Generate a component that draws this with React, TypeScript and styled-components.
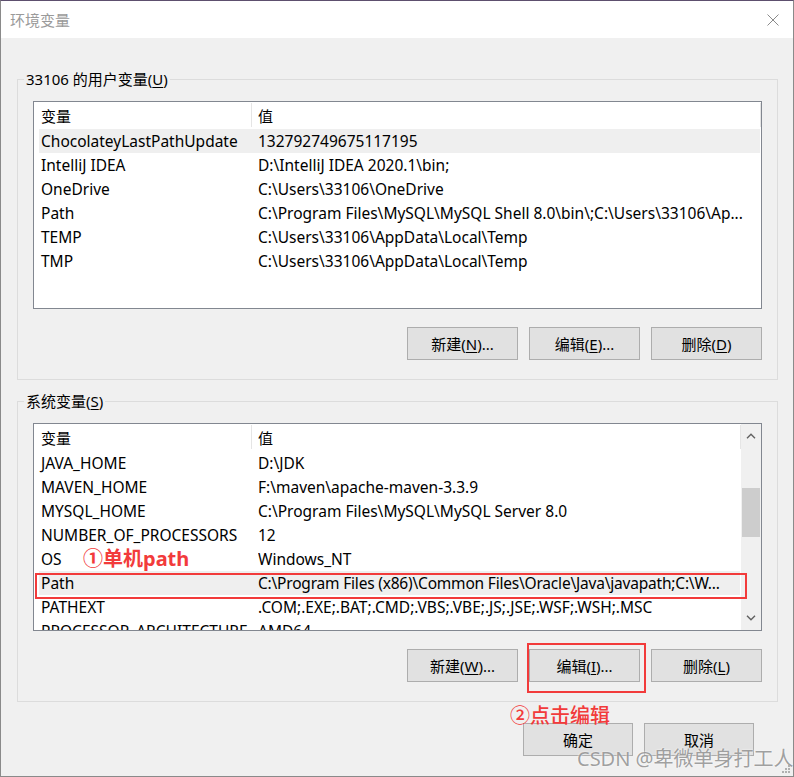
import styled, { createGlobalStyle } from "styled-components";

const GlobalStyle = createGlobalStyle`
  html, body {
    margin: 0;
    padding: 0;
    background: #ffffff;
  }
  body {
    font-family: "Noto Sans", "Noto Sans CJK SC", sans-serif;
  }
`;

const Window = styled.div`
  position: relative;
  width: 794px;
  height: 777px;
  box-sizing: border-box;
  border: 1px solid #8a8a8a;
  border-top-color: #5d4f6e;
  background: #f0f0f0;
  display: flex;
  flex-direction: column;
  font-size: 15px;
  color: #000;
  overflow: hidden;
`;

const TitleBar = styled.div`
  height: 37px;
  flex-shrink: 0;
  background: #fff;
  display: flex;
  align-items: center;
  justify-content: space-between;
  padding: 0 14px 0 9px;
`;

const Title = styled.span`
  font-family: "Noto Sans CJK SC", sans-serif;
  font-size: 15px;
  color: #9a9a9a;
`;

const Body = styled.div`
  display: flex;
  flex-direction: column;
  padding: 0 15px 0 16px;
`;

const Group = styled.fieldset<{ $top: number }>`
  margin: ${(p) => p.$top}px 0 0 0;
  padding: 12px 15px 19px 15px;
  border: 1px solid #dcdcdc;
  min-width: 0;
`;

const Legend = styled.legend`
  margin-left: -9px;
  padding: 0 2px;
  line-height: 20px;
  font-size: 15px;
`;

const Key = styled.span`
  text-decoration: underline;
  text-underline-offset: 2px;
`;

const ListBox = styled.div`
  height: 208px;
  box-sizing: border-box;
  border: 1px solid #828790;
  background: #fff;
  display: flex;
  overflow: hidden;
`;

const ListContent = styled.div`
  flex: 1;
  min-width: 0;
  overflow: hidden;
`;

const HeaderRow = styled.div`
  display: flex;
  height: 27px;
  box-sizing: border-box;
  padding-top: 3px;
  line-height: 24px;
`;

const HeaderCell = styled.div<{ $width?: number }>`
  box-sizing: border-box;
  ${(p) => (p.$width ? `width: ${p.$width}px;` : "flex: 1;")}
  padding-left: ${(p) => (p.$width ? 7 : 6)}px;
  border-right: 1px solid #e5e5e5;
  height: 24px;
  margin-top: -2px;
  padding-top: 2px;
  line-height: 22px;
  font-family: "Noto Sans CJK SC", sans-serif;
`;

const Row = styled.div<{ $selected?: boolean }>`
  display: flex;
  height: 24px;
  line-height: 24px;
  margin: 0 1px 0 5px;
  font-size: 15.5px;
  background: ${(p) => (p.$selected ? "#efefef" : "transparent")};
  white-space: nowrap;
`;

const NameCell = styled.div`
  width: 219px;
  flex-shrink: 0;
  box-sizing: border-box;
  padding-left: 2px;
  overflow: hidden;
`;

const ValueCell = styled.div<{ $tight?: boolean }>`
  flex: 1;
  overflow: hidden;
  letter-spacing: ${(p) => (p.$tight ? "-0.2px" : "normal")};
`;

const ScrollBar = styled.div`
  width: 20px;
  flex-shrink: 0;
  background: #f0f0f0;
  display: flex;
  flex-direction: column;
  align-items: center;
`;

const ScrollArrow = styled.div`
  height: 24px;
  display: flex;
  align-items: center;
  justify-content: center;
  width: 100%;
`;

const Track = styled.div`
  flex: 1;
  width: 100%;
  display: flex;
  flex-direction: column;
  align-items: center;
`;

const Thumb = styled.div`
  margin-top: 40px;
  width: 18px;
  height: 49px;
  background: #cdcdcd;
`;

const ButtonRow = styled.div<{ $gapTop: number; $right?: number }>`
  display: flex;
  justify-content: flex-end;
  gap: 11px;
  margin-top: ${(p) => p.$gapTop}px;
  padding-right: ${(p) => p.$right ?? 0}px;
`;

const Button = styled.button<{ $width?: number }>`
  width: ${(p) => p.$width ?? 111}px;
  height: 33px;
  box-sizing: border-box;
  background: #e1e1e1;
  border: 1px solid #adadad;
  font-family: "Noto Sans", "Noto Sans CJK SC", sans-serif;
  font-size: 15px;
  color: #000;
  padding: 0;
`;

const Mark = styled.div<{ $left: number; $top: number; $width: number; $height: number }>`
  position: absolute;
  left: ${(p) => p.$left}px;
  top: ${(p) => p.$top}px;
  width: ${(p) => p.$width}px;
  height: ${(p) => p.$height}px;
  box-sizing: border-box;
  border: 2px solid #f23b3b;
  pointer-events: none;
`;

const Note = styled.div<{ $left: number; $top: number; $bold?: boolean }>`
  position: absolute;
  left: ${(p) => p.$left}px;
  top: ${(p) => p.$top}px;
  font-family: "Noto Sans", "Noto Sans CJK SC", sans-serif;
  font-size: 20px;
  line-height: 22px;
  font-weight: ${(p) => (p.$bold ? 700 : 500)};
  color: #f23b3b;
  white-space: nowrap;
`;

const Watermark = styled.div`
  position: absolute;
  left: 576px;
  top: 746px;
  font-family: "Noto Sans", "Noto Sans CJK SC", sans-serif;
  font-size: 20px;
  line-height: 24px;
  color: rgba(130, 130, 130, 0.75);
  text-shadow: 0 0 2px #fff;
  white-space: nowrap;
`;

const Grip = styled.svg`
  position: absolute;
  right: 3px;
  bottom: 3px;
`;

type Variable = { name: string; value: string; selected?: boolean; tight?: boolean };

const userVars: Variable[] = [
  { name: "ChocolateyLastPathUpdate", value: "132792749675117195", selected: true },
  { name: "IntelliJ IDEA", value: "D:\\IntelliJ IDEA 2020.1\\bin;" },
  { name: "OneDrive", value: "C:\\Users\\33106\\OneDrive" },
  { name: "Path", value: "C:\\Program Files\\MySQL\\MySQL Shell 8.0\\bin\\;C:\\Users\\33106\\Ap..." },
  { name: "TEMP", value: "C:\\Users\\33106\\AppData\\Local\\Temp" },
  { name: "TMP", value: "C:\\Users\\33106\\AppData\\Local\\Temp" },
];

const systemVars: Variable[] = [
  { name: "JAVA_HOME", value: "D:\\JDK" },
  { name: "MAVEN_HOME", value: "F:\\maven\\apache-maven-3.3.9" },
  { name: "MYSQL_HOME", value: "C:\\Program Files\\MySQL\\MySQL Server 8.0" },
  { name: "NUMBER_OF_PROCESSORS", value: "12" },
  { name: "OS", value: "Windows_NT" },
  {
    name: "Path",
    value: "C:\\Program Files (x86)\\Common Files\\Oracle\\Java\\javapath;C:\\W...",
    selected: true,
    tight: true,
  },
  { name: "PATHEXT", value: ".COM;.EXE;.BAT;.CMD;.VBS;.VBE;.JS;.JSE;.WSF;.WSH;.MSC" },
  { name: "PROCESSOR_ARCHITECTURE", value: "AMD64" },
];

const Chevron = ({ up }: { up?: boolean }) => (
  <svg width="10" height="6" viewBox="0 0 10 6">
    <path
      d={up ? "M1 5.2 L5 1.2 L9 5.2" : "M1 0.8 L5 4.8 L9 0.8"}
      fill="none"
      stroke="#606060"
      strokeWidth="1.4"
    />
  </svg>
);

const VarList = ({ items, scroll }: { items: Variable[]; scroll?: boolean }) => (
  <ListBox>
    <ListContent>
      <HeaderRow>
        <HeaderCell $width={218}>变量</HeaderCell>
        <HeaderCell>值</HeaderCell>
      </HeaderRow>
      {items.map((v) => (
        <Row key={v.name + v.value} $selected={v.selected}>
          <NameCell>{v.name}</NameCell>
          <ValueCell $tight={v.tight}>{v.value}</ValueCell>
        </Row>
      ))}
    </ListContent>
    {scroll && (
      <ScrollBar>
        <ScrollArrow>
          <Chevron up />
        </ScrollArrow>
        <Track>
          <Thumb />
        </Track>
        <ScrollArrow>
          <Chevron />
        </ScrollArrow>
      </ScrollBar>
    )}
  </ListBox>
);

export default function App() {
  return (
    <>
      <GlobalStyle />
      <Window>
        <TitleBar>
          <Title>环境变量</Title>
          <svg width="12" height="12" viewBox="0 0 12 12">
            <path d="M0.5 0.5 L11.5 11.5 M11.5 0.5 L0.5 11.5" stroke="#8a8a8a" strokeWidth="1" />
          </svg>
        </TitleBar>
        <Body>
          <Group $top={31}>
            <Legend>
              33106 的用户变量(<Key>U</Key>)
            </Legend>
            <VarList items={userVars} />
            <ButtonRow $gapTop={18}>
              <Button>
                新建(<Key>N</Key>)...
              </Button>
              <Button>
                编辑(<Key>E</Key>)...
              </Button>
              <Button>
                删除(<Key>D</Key>)
              </Button>
            </ButtonRow>
          </Group>
          <Group $top={11}>
            <Legend>
              系统变量(<Key>S</Key>)
            </Legend>
            <VarList items={systemVars} scroll />
            <ButtonRow $gapTop={18}>
              <Button>
                新建(<Key>W</Key>)...
              </Button>
              <Button>
                编辑(<Key>I</Key>)...
              </Button>
              <Button>
                删除(<Key>L</Key>)
              </Button>
            </ButtonRow>
          </Group>
          <ButtonRow $gapTop={21} $right={24}>
            <Button $width={110}>确定</Button>
            <Button $width={110}>取消</Button>
          </ButtonRow>
        </Body>

        <Mark $left={34} $top={572} $width={712} $height={26} />
        <Mark $left={526} $top={642} $width={119} $height={50} />
        <Note $left={82} $top={547} $bold>
          ①单机path
        </Note>
        <Note $left={509} $top={704}>
          ②点击编辑
        </Note>
        <Watermark>CSDN @卑微单身打工人</Watermark>
        <Grip width="10" height="10" viewBox="0 0 10 10">
          <rect x="8" y="2" width="2" height="2" fill="#b0b0b0" />
          <rect x="5" y="5" width="2" height="2" fill="#b0b0b0" />
          <rect x="8" y="5" width="2" height="2" fill="#b0b0b0" />
          <rect x="2" y="8" width="2" height="2" fill="#b0b0b0" />
          <rect x="5" y="8" width="2" height="2" fill="#b0b0b0" />
          <rect x="8" y="8" width="2" height="2" fill="#b0b0b0" />
        </Grip>
      </Window>
    </>
  );
}
